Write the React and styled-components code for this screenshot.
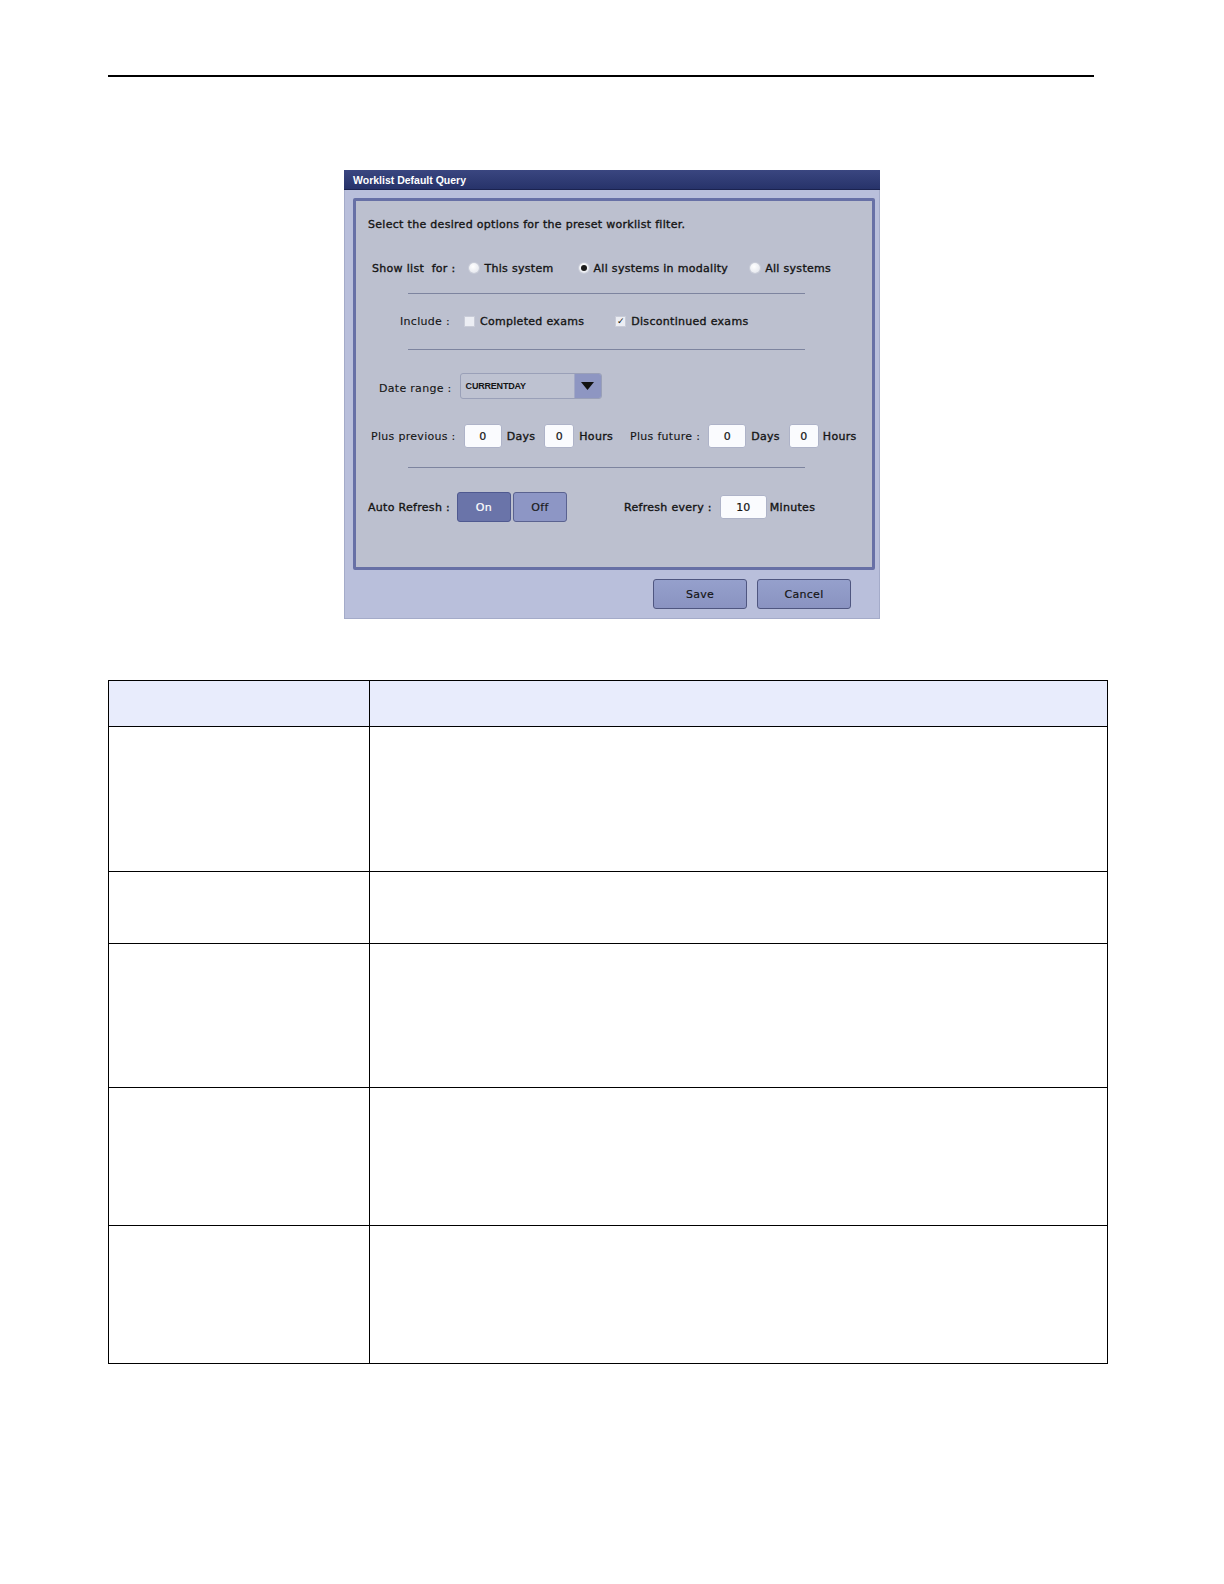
import { Fragment } from 'react';
import styled, { createGlobalStyle } from 'styled-components';

const Global = createGlobalStyle`
  html, body {
    margin: 0;
    padding: 0;
    background: #ffffff;
  }
  body {
    font-family: "DejaVu Sans", "Liberation Sans", sans-serif;
  }
`;

const Page = styled.div`
  padding: 75px 0 40px;
`;

const Rule = styled.div`
  margin-left: 108px;
  width: 986px;
  height: 2px;
  background: #000000;
`;

const Dialog = styled.div`
  margin: 93px auto 0;
  width: 536px;
  background: #b9bfdb;
  box-shadow: inset 0 0 0 1px #a4abc9;
`;

const TitleBar = styled.div`
  height: 19px;
  display: flex;
  align-items: center;
  padding-left: 9px;
  background: linear-gradient(#3a4680, #27336a);
  border-bottom: 1px solid #1b2350;
  color: #ffffff;
  font-family: "Liberation Sans", Arial, sans-serif;
  font-size: 10.5px;
  font-weight: bold;
`;

const Body = styled.div`
  padding: 8px 5px 0 9px;
`;

const Panel = styled.div`
  border: 3px solid #6770a6;
  border-radius: 2px;
  background: #bcc0cf;
  padding: 13px 0 45px;
  display: flex;
  flex-direction: column;
`;

const Row = styled.div`
  display: flex;
  align-items: center;
  height: ${p => p.$h || 20}px;
  margin-top: ${p => p.$top || 0}px;
  padding-left: ${p => p.$indent || 0}px;
  font-size: 11px;
  color: #141414;
  white-space: nowrap;
`;

const Text = styled.span`
  margin-left: ${p => p.$ml || 0}px;
  margin-top: ${p => p.$mt || 0}px;
  letter-spacing: 0.3px;
  -webkit-text-stroke: ${p => (p.$bold ? '0.35px' : '0.1px')} #141414;
`;

const Separator = styled.div`
  margin: ${p => p.$top}px 0 0 52px;
  width: 397px;
  height: 1px;
  background: #7d849f;
`;

const Radio = styled.span`
  margin-left: ${p => p.$ml || 0}px;
  width: 10px;
  height: 10px;
  border-radius: 50%;
  background: radial-gradient(circle at 40% 35%, #ffffff, #dfe2ea);
  box-shadow: 0 0 0 1px #c9ccd8;
  position: relative;
  &::after {
    content: '';
    display: ${p => (p.$checked ? 'block' : 'none')};
    position: absolute;
    left: 2px;
    top: 2px;
    width: 6px;
    height: 6px;
    border-radius: 50%;
    background: #1a1a1a;
  }
`;

const Check = styled.span`
  margin-left: ${p => p.$ml || 0}px;
  width: 11px;
  height: 11px;
  box-sizing: border-box;
  background: #eceef4;
  border: 1px solid #c9ccd8;
  display: flex;
  align-items: center;
  justify-content: center;
  font-size: 9px;
  line-height: 1;
  color: #111;
`;

const Select = styled.div`
  margin-left: ${p => p.$ml || 0}px;
  width: 142px;
  height: 26px;
  box-sizing: border-box;
  border: 1px solid #9aa0b8;
  border-radius: 3px;
  background: #bec2d1;
  display: flex;
  align-items: stretch;
  overflow: hidden;
`;

const SelectValue = styled.span`
  flex: 1;
  display: flex;
  align-items: center;
  padding-left: 5px;
  font-family: "Liberation Sans", sans-serif;
  font-size: 9px;
  font-weight: bold;
  letter-spacing: -0.2px;
  color: #141414;
`;

const SelectArrow = styled.span`
  width: 26px;
  background: #8e96c2;
  border-left: 1px solid #a3a9c6;
  display: flex;
  align-items: center;
  justify-content: center;
`;

const Field = styled.span`
  margin-left: ${p => p.$ml || 0}px;
  width: ${p => p.$w}px;
  height: ${p => p.$h || 24}px;
  box-sizing: border-box;
  border: 1px solid #aeb3c8;
  border-radius: 3px;
  background: #fafbfe;
  display: flex;
  align-items: center;
  justify-content: center;
  font-size: 11px;
  color: #141414;
  -webkit-text-stroke: 0.2px #141414;
`;

const Toggle = styled.span`
  margin-left: ${p => p.$ml || 0}px;
  width: 54px;
  height: 30px;
  box-sizing: border-box;
  border: 1px solid ${p => (p.$active ? '#4f5990' : '#5a6290')};
  border-radius: 3px;
  background: ${p => (p.$active ? '#6a74a9' : '#8d96c5')};
  color: ${p => (p.$active ? '#ffffff' : '#1a1a1a')};
  display: flex;
  align-items: center;
  justify-content: center;
  font-size: 11px;
  letter-spacing: 0.3px;
  -webkit-text-stroke: 0.2px ${p => (p.$active ? '#ffffff' : '#1a1a1a')};
`;

const Footer = styled.div`
  display: flex;
  justify-content: flex-end;
  gap: 10px;
  padding: 9px 29px 10px 0;
`;

const Button = styled.span`
  width: 94px;
  height: 30px;
  box-sizing: border-box;
  border: 1px solid #4f5680;
  border-radius: 3px;
  background: linear-gradient(#95a0cc, #8a93c1);
  display: flex;
  align-items: center;
  justify-content: center;
  font-size: 11px;
  color: #141414;
  letter-spacing: 0.3px;
  -webkit-text-stroke: 0.15px #141414;
`;

const Table = styled.div`
  margin: 61px 0 0 108px;
  width: 998px;
  border: 1px solid #000000;
  display: grid;
  grid-template-columns: 260px 1fr;
`;

const Cell = styled.div`
  height: ${p => p.$h}px;
  box-sizing: border-box;
  background: ${p => (p.$head ? '#e8ecfc' : '#ffffff')};
  border-left: ${p => (p.$first ? 'none' : '1px solid #000000')};
  border-top: ${p => (p.$topRow ? 'none' : '1px solid #000000')};
`;

const rows = [45, 145, 72, 144, 138, 138];

export default function App() {
  return (
    <Page>
      <Global />
      <Rule />
      <Dialog>
        <TitleBar>Worklist Default Query</TitleBar>
        <Body>
          <Panel>
            <Row $indent={12}>
              <Text $bold>Select the desired options for the preset worklist filter.</Text>
            </Row>
            <Row $indent={16} $top={24}>
              <Text $bold>Show list&nbsp; for :</Text>
              <Radio $ml={14} />
              <Text $bold $ml={5}>This system</Text>
              <Radio $ml={25} $checked />
              <Text $bold $ml={5}>All systems in modality</Text>
              <Radio $ml={22} />
              <Text $bold $ml={5}>All systems</Text>
            </Row>
            <Separator $top={15} />
            <Row $indent={44} $top={17}>
              <Text>Include :</Text>
              <Check $ml={14} />
              <Text $bold $ml={5}>Completed exams</Text>
              <Check $ml={31}>✓</Check>
              <Text $bold $ml={5}>Discontinued exams</Text>
            </Row>
            <Separator $top={18} />
            <Row $indent={23} $top={23} $h={26}>
              <Text $mt={5}>Date range :</Text>
              <Select $ml={8}>
                <SelectValue>CURRENTDAY</SelectValue>
                <SelectArrow>
                  <svg width="13" height="8" viewBox="0 0 13 8">
                    <path d="M0 0 H13 L6.5 8 Z" fill="#111111" />
                  </svg>
                </SelectArrow>
              </Select>
            </Row>
            <Row $indent={15} $top={25} $h={24}>
              <Text>Plus previous :</Text>
              <Field $ml={8} $w={38}>0</Field>
              <Text $bold $ml={5}>Days</Text>
              <Field $ml={9} $w={30}>0</Field>
              <Text $bold $ml={5}>Hours</Text>
              <Text $ml={17}>Plus future :</Text>
              <Field $ml={8} $w={38}>0</Field>
              <Text $bold $ml={5}>Days</Text>
              <Field $ml={9} $w={30}>0</Field>
              <Text $bold $ml={4}>Hours</Text>
            </Row>
            <Separator $top={19} />
            <Row $indent={12} $top={24} $h={30}>
              <Text $bold>Auto Refresh :</Text>
              <Toggle $ml={7} $active>On</Toggle>
              <Toggle $ml={2}>Off</Toggle>
              <Text $bold $ml={57}>Refresh every :</Text>
              <Field $ml={8} $w={47}>10</Field>
              <Text $bold $ml={3}>Minutes</Text>
            </Row>
          </Panel>
        </Body>
        <Footer>
          <Button>Save</Button>
          <Button>Cancel</Button>
        </Footer>
      </Dialog>
      <Table>
        {rows.map((h, i) => (
          <Fragment key={i}>
            <Cell $h={h} $head={i === 0} $first $topRow={i === 0} />
            <Cell $h={h} $head={i === 0} $topRow={i === 0} />
          </Fragment>
        ))}
      </Table>
    </Page>
  );
}
